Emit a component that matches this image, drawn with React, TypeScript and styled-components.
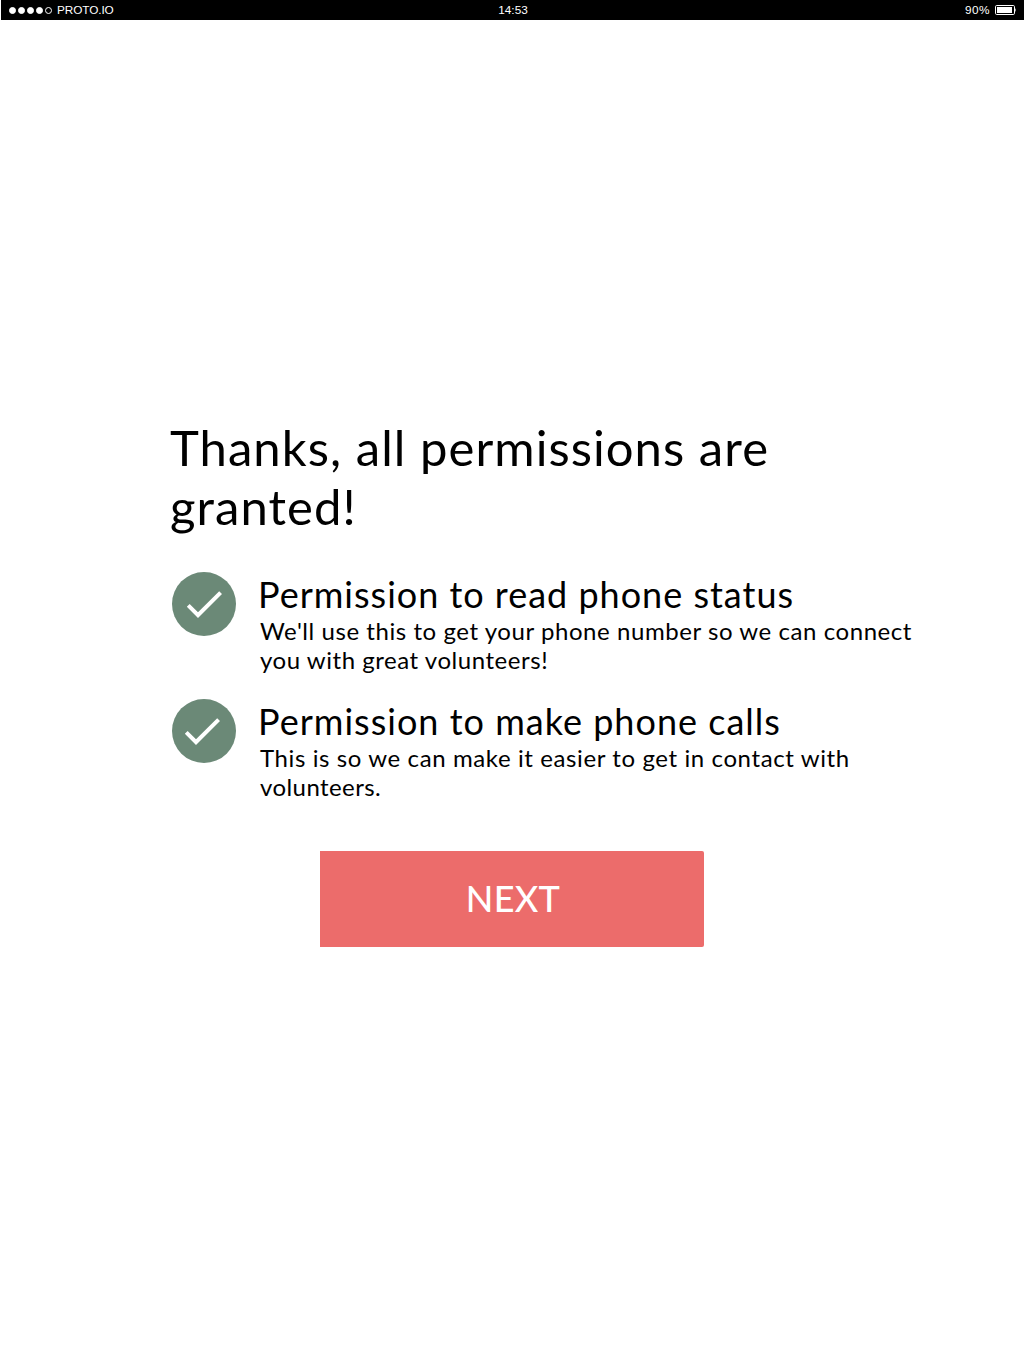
import React from "react";
import styled, { createGlobalStyle } from "styled-components";

const GlobalStyle = createGlobalStyle`
  *, *::before, *::after { box-sizing: border-box; }
  body {
    margin: 0;
    background: #fff;
    color: #000;
    font-family: Lato, "Open Sans", sans-serif;
  }
  h1, h2, p { margin: 0; font-weight: 400; }
`;

const Screen = styled.div`
  width: 1024px;
  min-height: 1366px;
  background: #fff;
`;

const StatusBar = styled.header`
  display: grid;
  grid-template-columns: 1fr auto 1fr;
  align-items: center;
  height: 20px;
  margin-left: 1px;
  padding: 0 8px;
  background: #000;
  color: #fff;
  font: 11.8px/20px "Liberation Sans", Arial, sans-serif;
`;

const StatusGroup = styled.div<{ $end?: boolean }>`
  display: flex;
  align-items: center;
  justify-content: ${(p) => (p.$end ? "flex-end" : "flex-start")};
  gap: 5px;
`;

const Signal = styled.div`
  display: flex;
  gap: 2px;
  padding-top: 1px;
`;

const Dot = styled.span<{ $filled: boolean }>`
  width: 7px;
  height: 7px;
  border: 1px solid #fff;
  border-radius: 50%;
  background: ${(p) => (p.$filled ? "#fff" : "transparent")};
`;

const Clock = styled.time`
  padding-left: 1px;
`;

const Battery = styled.svg`
  display: block;
  width: 21px;
  height: 10px;
`;

const Main = styled.main`
  padding: 398px 100px 0 170px;
`;

const Heading = styled.h1`
  font-size: 49px;
  line-height: 59px;
`;

const Line = styled.span<{ $spacing: number }>`
  display: block;
  white-space: nowrap;
  letter-spacing: ${(p) => p.$spacing}px;
`;

const PermissionList = styled.div`
  display: flex;
  flex-direction: column;
  gap: 25px;
  margin-top: 36px;
  padding-left: 2px;
`;

const Permission = styled.section`
  display: flex;
  align-items: flex-start;
  height: 102px;
`;

const Badge = styled.div<{ $inset: number }>`
  flex: none;
  width: 64px;
  height: 64px;
  margin-right: 22px;
  padding: 8px 0 0 ${(p) => p.$inset}px;
  border-radius: 50%;
  background: #6b8977;
`;

const CheckIcon = styled.svg`
  display: block;
  width: 48px;
  height: 48px;
  fill: #fff;
`;

const Details = styled.div`
  padding-top: 1px;
`;

const Title = styled.h2`
  font-size: 36px;
  line-height: 43px;
`;

const Description = styled.p`
  padding-left: 2px;
  font-size: 24px;
  line-height: 29px;
`;

const NextButton = styled.button`
  display: block;
  width: 384px;
  height: 96px;
  margin: 50px 0 0 150px;
  padding: 0 0 2px 2px;
  border: 0;
  border-radius: 0 2px 2px 0;
  background: #ec6c6b;
  color: #fff;
  font: 500 36px/43px Lato, "Open Sans", sans-serif;
  letter-spacing: 0.3px;
`;

type TextLine = { text: string; spacing: number };

const permissions: { inset: number; title: TextLine; lines: TextLine[] }[] = [
  {
    inset: 8,
    title: { text: "Permission to read phone status", spacing: 0.99 },
    lines: [
      { text: "We'll use this to get your phone number so we can connect", spacing: 0.565 },
      { text: "you with great volunteers!", spacing: 0.54 },
    ],
  },
  {
    inset: 6,
    title: { text: "Permission to make phone calls", spacing: 1.01 },
    lines: [
      { text: "This is so we can make it easier to get in contact with", spacing: 0.605 },
      { text: "volunteers.", spacing: 0.42 },
    ],
  },
];

export default function App() {
  return (
    <Screen>
      <GlobalStyle />
      <StatusBar>
        <StatusGroup>
          <Signal>
            {[true, true, true, true, false].map((filled, i) => (
              <Dot key={i} $filled={filled} />
            ))}
          </Signal>
          <Line $spacing={-0.1}>PROTO.IO</Line>
        </StatusGroup>
        <Clock>14:53</Clock>
        <StatusGroup $end>
          <Line $spacing={0.45}>90%</Line>
          <Battery viewBox="0 0 21 10">
            <rect x="0.5" y="0.5" width="19" height="9" rx="1.2" fill="none" stroke="#fff" />
            <rect x="2" y="2" width="15" height="6" fill="#fff" />
            <path d="M20 3.5h.4q.6 1.5 0 3H20z" fill="#fff" />
          </Battery>
        </StatusGroup>
      </StatusBar>
      <Main>
        <Heading>
          <Line $spacing={1.05}>Thanks, all permissions are</Line>
          <Line $spacing={1.05}>granted!</Line>
        </Heading>
        <PermissionList>
          {permissions.map((p) => (
            <Permission key={p.title.text}>
              <Badge $inset={p.inset}>
                <CheckIcon viewBox="0 0 24 24">
                  <path d="M9 16.17L4.83 12l-1.42 1.41L9 19 21 7l-1.41-1.41z" />
                </CheckIcon>
              </Badge>
              <Details>
                <Title>
                  <Line $spacing={p.title.spacing}>{p.title.text}</Line>
                </Title>
                <Description>
                  {p.lines.map((l) => (
                    <Line key={l.text} $spacing={l.spacing}>{l.text}</Line>
                  ))}
                </Description>
              </Details>
            </Permission>
          ))}
        </PermissionList>
        <NextButton>NEXT</NextButton>
      </Main>
    </Screen>
  );
}
